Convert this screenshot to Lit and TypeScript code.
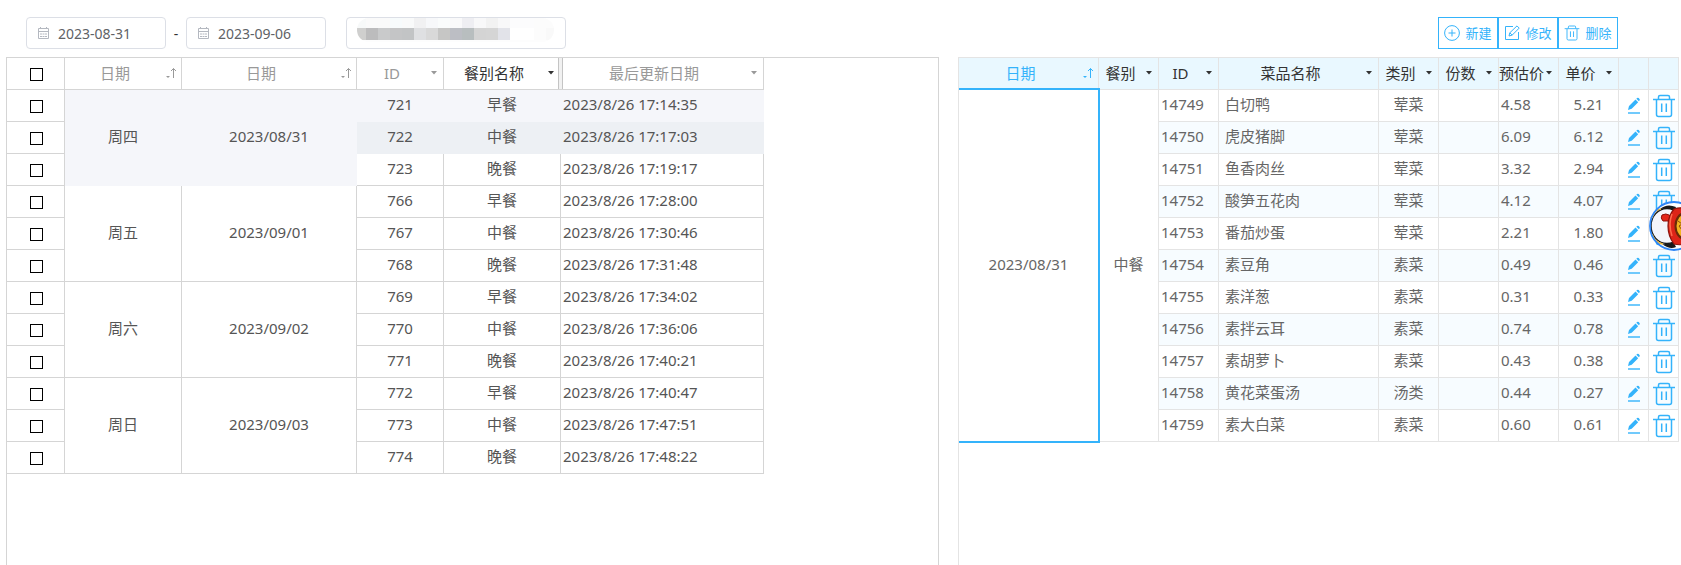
import { LitElement, html, svg, css, nothing } from "lit";
import { customElement, property } from "lit/decorators.js";
import { classMap } from "lit/directives/class-map.js";

const WEEK = [
  { day: "周四", date: "2023/08/31", meals: [["721", "早餐", "17:14:35"], ["722", "中餐", "17:17:03"], ["723", "晚餐", "17:19:17"]] },
  { day: "周五", date: "2023/09/01", meals: [["766", "早餐", "17:28:00"], ["767", "中餐", "17:30:46"], ["768", "晚餐", "17:31:48"]] },
  { day: "周六", date: "2023/09/02", meals: [["769", "早餐", "17:34:02"], ["770", "中餐", "17:36:06"], ["771", "晚餐", "17:40:21"]] },
  { day: "周日", date: "2023/09/03", meals: [["772", "早餐", "17:40:47"], ["773", "中餐", "17:47:51"], ["774", "晚餐", "17:48:22"]] },
];

const DISHES = [
  ["14749", "白切鸭", "荤菜", "4.58", "5.21"],
  ["14750", "虎皮猪脚", "荤菜", "6.09", "6.12"],
  ["14751", "鱼香肉丝", "荤菜", "3.32", "2.94"],
  ["14752", "酸笋五花肉", "荤菜", "4.12", "4.07"],
  ["14753", "番茄炒蛋", "荤菜", "2.21", "1.80"],
  ["14754", "素豆角", "素菜", "0.49", "0.46"],
  ["14755", "素洋葱", "素菜", "0.31", "0.33"],
  ["14756", "素拌云耳", "素菜", "0.74", "0.78"],
  ["14757", "素胡萝卜", "素菜", "0.43", "0.38"],
  ["14758", "黄花菜蛋汤", "汤类", "0.44", "0.27"],
  ["14759", "素大白菜", "素菜", "0.60", "0.61"],
];

const sortIcon = html`<svg class="sort" viewBox="0 0 11 12" aria-hidden="true">
  <path d="M0 9h4L2 11z" fill="currentColor" />
  <path d="M7.5 11V1.5M5 4l2.5-2.5L10 4" fill="none" stroke="currentColor" />
</svg>`;

const caretIcon = html`<svg class="caret" viewBox="0 0 6 4" aria-hidden="true">
  <path d="M0 0h6L3 3.5z" fill="currentColor" />
</svg>`;

const calendarIcon = html`<svg class="calendar" viewBox="0 0 13 14" aria-hidden="true">
  <path d="M1.5 2.5h10v10h-10zM1.500 5.500h10M3.500 1v2M9.500 1v2M3 8h2M5.500 8h2M8 8h2M3 10.500h2M5.500 10.500h2M8 10.500h2" fill="none" stroke="currentColor" />
</svg>`;

const trashShape = svg`<path d="M0 5.5h22M5.5 5V3q0-1.5 1.500-1.500h8q1.500 0 1.500 1.500v2M3.500 6v14.500q0 2 2 2h11q2 0 2-2V6M8.700 9.500v8.500M13.300 9.500v8.500" fill="none" stroke="currentColor" stroke-width="var(--trash-stroke)" />`;

const trashIcon = html`<svg class="trash" viewBox="0 0 22 24" aria-hidden="true">${trashShape}</svg>`;

const pencilIcon = html`<svg class="pencil" viewBox="0 0 14 17" aria-hidden="true">
  <path d="M1 16h12" stroke="currentColor" stroke-width="1.4" />
  <path d="M1 13l1-4 6.500-6.500 2.700 2.700L4.700 11.800zM9.300 1.800l.8-.8q.8-.6 1.600.1l.8.8q.7.8 0 1.600l-.6.800z" fill="currentColor" />
</svg>`;

const addIcon = html`<svg class="tool" viewBox="0 0 16 16" aria-hidden="true">
  <circle cx="8" cy="8" r="7.400" fill="none" stroke="currentColor" />
  <path d="M8 4.500v7M4.500 8h7" stroke="currentColor" />
</svg>`;

const editIcon = html`<svg class="tool" viewBox="0 0 16 16" aria-hidden="true">
  <path d="M9 1.500H1.500v13h13V7M5 11l.8-3.200L13 .9l2.200 2.200-7 7zM5.800 7.800l2.400 2.300" fill="none" stroke="currentColor" />
</svg>`;

const MASK_TOP = ["#f7f9f9", "#fafafa", "#fafafa", "#f7fbfc", "#f9fafa", "#f1f1f2", "#f7f8fa", "#fafcfc", "#f9f9fa", "#eeeef2", "#f8f8f9", "#f2f2f2", "#f8f8f9", "#fcfcfd", "#fcfcfd", "#fcfcfc", "#fcfcfc"];
const MASK_LOW = ["#cfcfce", "#bcbcbd", "#c9cacb", "#c4c5c6", "#c2c4c5", "#dfe0e2", "#d9d9d9", "#c6c6c5", "#bcbec4", "#b8bebf", "#d4d4d4", "#d5d5d5", "#e2e3e9", "#ffffff", "#ffffff", "#fcfcfc", "#f9f9f9"];

const maskBlocks = html`<svg class="mask" viewBox="0 0 197 24" aria-hidden="true">
  <defs><clipPath id="pill"><rect width="197" height="24" rx="12" /></clipPath></defs>
  <g clip-path="url(#pill)" shape-rendering="crispEdges">
    <rect width="197" height="24" fill="#fdfdfd" />
    ${MASK_TOP.map((c, i) => svg`<rect x=${i * 12 - 3} y="0" width="12" height="10" fill=${c} />`)}
    ${MASK_LOW.map((c, i) => svg`<rect x=${i * 12 - 3} y="10" width="12" height="12" fill=${c} />`)}
  </g>
</svg>`;

const mascot = html`<svg viewBox="0 0 50 50" aria-hidden="true">
  <defs><clipPath id="badge"><circle cx="25" cy="25" r="24" /></clipPath></defs>
  <circle cx="25" cy="25" r="24" fill="#fff" />
  <g clip-path="url(#badge)">
    <path d="M11 8Q18 2 27 6L25 11Q18 7 11 8zM13 43q8 6 14 3l-3-6q-6 4-11 3z" fill="#181818" />
    <ellipse cx="18" cy="25" rx="16" ry="17.500" fill="#f4f5fb" stroke="#181818" stroke-width="1.400" />
    <path d="M3 17q2-8 9-9M3 33q3 9 11 10" fill="none" stroke="#e8b63c" stroke-width="1.500" />
    <path d="M13 14q4-2 7 0l3 2-2 4q-4 0-7 0-3-3-1-6z" fill="#e3261b" stroke="#8c120c" />
    <path d="M25 8q12-4 20 6v23q-8 9-20 6-6-8-6-18t6-17z" fill="#dd2418" stroke="#8c120c" stroke-width="1.200" />
    <ellipse cx="36" cy="25" rx="10.500" ry="14" fill="#6b2a08" />
    <ellipse cx="37" cy="25" rx="9.500" ry="12" fill="#f3b51f" />
    <path d="M29 20l4 3-3 2 3 4" fill="none" stroke="#8a4a0c" />
    <path d="M23 13q-4 10 0 22" fill="none" stroke="#ff6a4c" stroke-width="1.500" />
  </g>
  <circle cx="25" cy="25" r="24" fill="none" stroke="#2f86f6" stroke-width="1.800" />
</svg>`;

const gridStyles = css`
  :host {
    display: block;
    font-family: "Noto Sans", "Noto Sans CJK SC", sans-serif;
    font-size: 15px;
  }
  table {
    table-layout: fixed;
    border-collapse: separate;
    border-spacing: 0;
  }
  th,
  td {
    box-sizing: border-box;
    height: 32px;
    padding: 0 0 2px;
    border: 0 solid var(--line);
    border-width: 0 1px 1px 0;
    font-weight: 400;
    line-height: 20px;
    text-align: center;
    white-space: nowrap;
  }
  td {
    padding-bottom: 4px;
  }
  .head {
    display: flex;
    align-items: center;
  }
  .label {
    flex: 1;
    min-width: 0;
  }
  .mark {
    display: flex;
    flex: none;
    justify-content: flex-end;
    width: 16px;
    box-sizing: border-box;
    padding-right: 6px;
  }
  .mark.sorted {
    padding-right: 4px;
  }
  .sort {
    width: 11px;
    height: 12px;
  }
  .caret {
    width: 6px;
    height: 4px;
  }
  .start {
    padding-left: 2px;
    text-align: left;
  }
`;

const head = (label: string, sorted = false) => html`<div class="head">
  <span class="label">${label}</span>
  <span class=${classMap({ mark: true, sorted })}>${sorted ? sortIcon : caretIcon}</span>
</div>`;

@customElement("meal-grid")
export class MealGrid extends LitElement {
  static styles = [
    gridStyles,
    css`
      :host {
        --line: #d5d5d5;
        color: #555;
      }
      table {
        width: 757px;
      }
      th {
        color: #999;
      }
      .day { width: 117px; }
      .date { width: 175px; }
      .id { width: 87px; }
      .meal { width: 117px; }
      th.active {
        color: #333;
      }
      .pick {
        width: 58px;
        padding: 0 0 0 2px;
      }
      .box {
        display: block;
        width: 13px;
        height: 13px;
        margin: 2px auto 0;
        appearance: none;
        border: 1px solid #000;
        background: #fff;
      }
      .box:checked {
        background: #000;
      }
      .hover {
        border-color: #f5f6fa;
        background: #f5f6fa;
      }
      .current {
        border-color: #edf0f4;
        background: #edf0f4;
      }
      .resizer {
        position: relative;
      }
      .grip {
        position: absolute;
        top: 0;
        right: -3px;
        bottom: 0;
        width: 3px;
        border: solid #c4c4c4;
        border-width: 0 1px;
        background: #f1f1f1;
      }
    `,
  ];

  render() {
    return html`<table>
      <thead>
        <tr>
          <th class="pick"><input class="box" type="checkbox" aria-label="全选" /></th>
          <th class="day">${head("日期", true)}</th>
          <th class="date">${head("日期", true)}</th>
          <th class="id">${head("ID")}</th>
          <th class="meal active resizer">${head("餐别名称")}<span class="grip"></span></th>
          <th>${head("最后更新日期")}</th>
        </tr>
      </thead>
      <tbody>
        ${WEEK.map((group, g) =>
          group.meals.map(([id, meal, time], m) => {
            const tone = { hover: g === 0 && m === 0, current: g === 0 && m === 1 };
            return html`<tr>
              <td class="pick"><input class="box" type="checkbox" aria-label=${id} /></td>
              ${m === 0
                ? html`<td class=${classMap({ hover: g === 0 })} rowspan="3">${group.day}</td>
                    <td class=${classMap({ hover: g === 0 })} rowspan="3">${group.date}</td>`
                : nothing}
              <td class=${classMap(tone)}>${id}</td>
              <td class=${classMap(tone)}>${meal}</td>
              <td class=${classMap({ ...tone, start: true })}>2023/8/26 ${time}</td>
            </tr>`;
          })
        )}
      </tbody>
    </table>`;
  }
}

@customElement("dish-grid")
export class DishGrid extends LitElement {
  static styles = [
    gridStyles,
    css`
      :host {
        --line: #e4e4e4;
        --accent: #34b3fb;
        color: #666;
      }
      table {
        width: 100%;
      }
      th {
        background: #e9f8ff;
        color: #333;
      }
      .date { width: 140px; }
      .narrow { width: 60px; }
      .action { width: 30px; }
      th.sorted-by {
        color: var(--accent);
      }
      tbody tr:nth-child(even) td {
        background: #f7fcff;
      }
      td.selected {
        position: relative;
      }
      .selected::after {
        content: "";
        position: absolute;
        inset: -2px -2px -2px 0;
        border: solid var(--accent);
        border-width: 2px 2px 2px 0;
        pointer-events: none;
      }
      .name {
        padding-left: 6px;
        text-align: left;
      }
      td.icon {
        padding: 0;
      }
      button {
        display: flex;
        justify-content: center;
        align-items: center;
        width: 100%;
        height: 24px;
        padding: 0;
        border: 0;
        background: none;
        color: var(--accent);
        cursor: pointer;
      }
      .trash {
        --trash-stroke: 1.5px;
        flex: none;
        width: 22px;
        height: 24px;
      }
      .pencil {
        width: 14px;
        height: 17px;
      }
    `,
  ];

  render() {
    return html`<table>
      <thead>
        <tr>
          <th class="date sorted-by">${head("日期", true)}</th>
          <th class="narrow">${head("餐别")}</th>
          <th class="narrow">${head("ID")}</th>
          <th>${head("菜品名称")}</th>
          <th class="narrow">${head("类别")}</th>
          <th class="narrow">${head("份数")}</th>
          <th class="narrow">${head("预估价")}</th>
          <th class="narrow">${head("单价")}</th>
          <th class="action"></th>
          <th class="action"></th>
        </tr>
      </thead>
      <tbody>
        ${DISHES.map(
          ([id, name, kind, estimate, price], i) => html`<tr>
            ${i === 0
              ? html`<td class="selected" rowspan=${DISHES.length}>2023/08/31</td>
                  <td rowspan=${DISHES.length}>中餐</td>`
              : nothing}
            <td class="start">${id}</td>
            <td class="name">${name}</td>
            <td>${kind}</td>
            <td></td>
            <td class="start">${estimate}</td>
            <td>${price}</td>
            <td class="icon"><button aria-label="修改">${pencilIcon}</button></td>
            <td class="icon"><button aria-label="删除">${trashIcon}</button></td>
          </tr>`
        )}
      </tbody>
    </table>`;
  }
}

@customElement("app-field")
export class AppField extends LitElement {
  @property() value = "";
  @property() label = "";
  @property({ type: Boolean }) masked = false;

  static styles = css`
    :host {
      display: block;
      width: 140px;
    }
    :host([masked]) {
      width: 220px;
    }
    .field {
      position: relative;
      display: flex;
      align-items: center;
      box-sizing: border-box;
      height: 32px;
      gap: 8px;
      padding: 0 10px;
      border: 1px solid #dcdfe6;
      border-radius: 4px;
      background: #fff;
      color: #b4b8c0;
    }
    input {
      flex: 1;
      min-width: 0;
      padding: 2px 0 0;
      border: 0;
      outline: 0;
      background: none;
      color: #606266;
      font: 14px/20px "Noto Sans", "Noto Sans CJK SC", sans-serif;
    }
    .calendar {
      flex: none;
      width: 13px;
      height: 14px;
    }
    .mask {
      position: absolute;
      top: 0;
      left: 10px;
      width: 197px;
      height: 24px;
    }
  `;

  render() {
    return html`<label class="field">
      ${this.masked ? nothing : calendarIcon}
      <input type="text" aria-label=${this.label} .value=${this.value} />
      ${this.masked ? maskBlocks : nothing}
    </label>`;
  }
}

@customElement("app-root")
export class AppRoot extends LitElement {
  static styles = css`
    :host {
      display: block;
      font-family: "Noto Sans", "Noto Sans CJK SC", sans-serif;
      font-size: 14px;
      color: #333;
      background: #fff;
    }
    .page {
      display: flex;
      gap: 19px;
      box-sizing: border-box;
      min-height: 100vh;
      padding: 17px 2px 0 6px;
    }
    .column {
      display: flex;
      flex-direction: column;
      gap: 8px;
    }
    .meals {
      flex: 1;
      min-width: 0;
    }
    .dishes {
      flex: none;
      width: 721px;
    }
    .bar {
      display: flex;
      align-items: center;
      height: 32px;
    }
    .filters {
      padding-left: 20px;
    }
    .dash {
      width: 20px;
      text-align: center;
    }
    .keyword {
      margin-left: 20px;
    }
    .actions {
      justify-content: flex-end;
      padding-right: 61px;
    }
    .actions button {
      display: flex;
      justify-content: center;
      align-items: center;
      gap: 5px;
      box-sizing: border-box;
      width: 60px;
      height: 32px;
      padding: 0;
      border: 1px solid #34b3fb;
      background: #fff;
      color: #34b3fb;
      font: 13px/20px "Noto Sans", "Noto Sans CJK SC", sans-serif;
      white-space: nowrap;
      cursor: pointer;
    }
    .tool,
    .trash {
      flex: none;
      width: 16px;
      height: 16px;
    }
    .trash {
      --trash-stroke: 1.4px;
    }
    .panel {
      flex: 1;
      border: solid #d5d5d5;
      border-width: 1px 1px 0;
    }
    .dishes .panel {
      border-color: #e4e4e4;
      border-right: 0;
    }
    .mascot {
      position: fixed;
      top: 201px;
      right: -18px;
      width: 50px;
      height: 50px;
      padding: 0;
      border: 0;
      border-radius: 50%;
      background: none;
      cursor: pointer;
    }
  `;

  render() {
    return html`<main class="page">
        <section class="column meals">
          <div class="bar filters">
            <app-field label="开始日期" value="2023-08-31"></app-field>
            <span class="dash">-</span>
            <app-field label="结束日期" value="2023-09-06"></app-field>
            <app-field class="keyword" label="名称" masked></app-field>
          </div>
          <div class="panel"><meal-grid></meal-grid></div>
        </section>
        <section class="column dishes">
          <div class="bar actions">
            <button>${addIcon}新建</button>
            <button>${editIcon}修改</button>
            <button>${trashIcon}删除</button>
          </div>
          <div class="panel"><dish-grid></dish-grid></div>
        </section>
      </main>
      <button class="mascot" aria-label="助手">${mascot}</button>`;
  }
}
